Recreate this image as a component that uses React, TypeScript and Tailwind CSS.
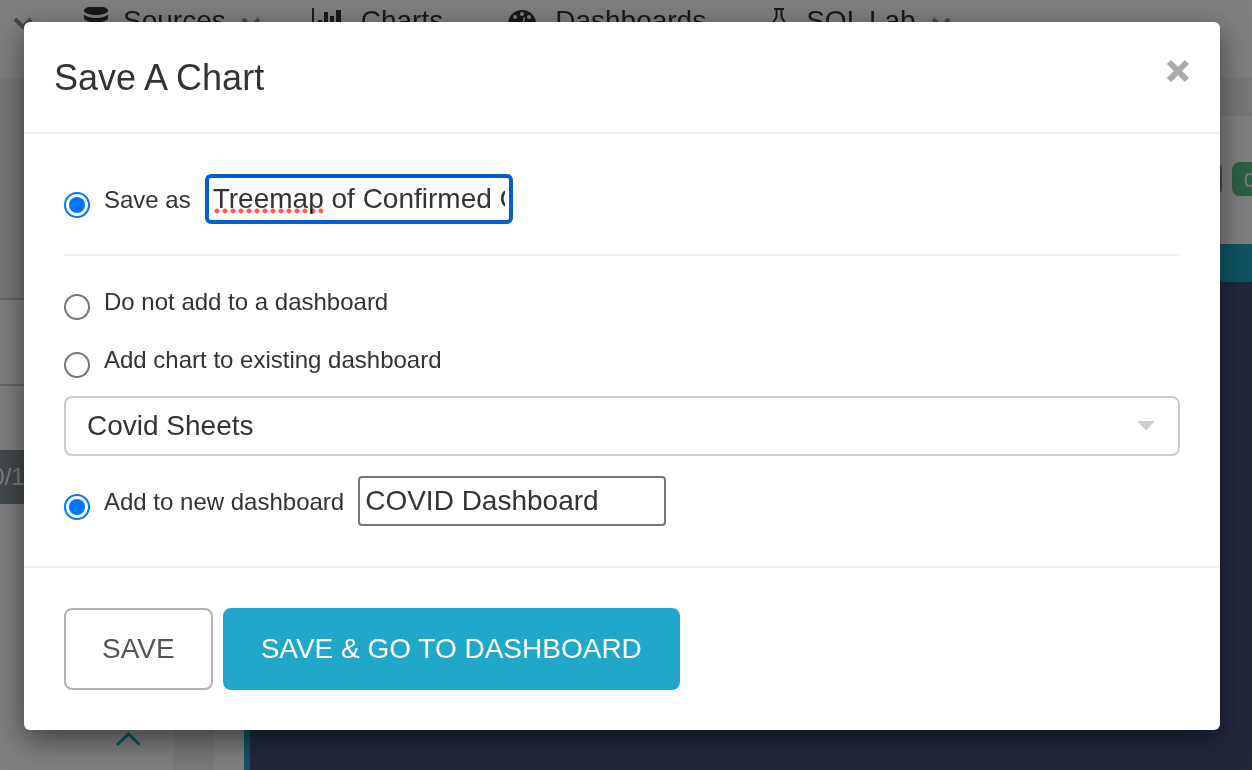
import React, { useState } from "react";

const existingDashboards = ["Covid Sheets", "Sales Dashboard", "World Bank's Data"];

function NavChevron() {
  return (
    <svg viewBox="0 0 20 14" className="mt-[17px] h-[14px] w-5 shrink-0 self-start" fill="none" stroke="#879399" strokeWidth="4">
      <path d="M2 2l8 8 8-8" />
    </svg>
  );
}

function DatabaseIcon() {
  return (
    <svg viewBox="0 1 24 28" className="h-7 w-6 shrink-0" fill="#333">
      <ellipse cx="12" cy="4.5" rx="12" ry="4.5" />
      <path d="M0 8.500c2.500 2.400 7 3.500 12 3.500s9.500-1.100 12-3.500V12c0 2.500-5.400 4.500-12 4.500S0 14.500 0 12z" />
      <path d="M0 16c2.500 2.400 7 3.500 12 3.500s9.500-1.100 12-3.500v6c0 3-5.400 5-12 5S0 25 0 22z" />
    </svg>
  );
}

function BarChartIcon() {
  return (
    <svg viewBox="0 1 34 28" className="h-7 w-[34px] shrink-0" fill="#333">
      <path d="M0 2h2v22h32v2H0z" />
      <path d="M6 14h4v8H6zM12 6h4v16h-4zM18 10h4v12h-4zM24 4h5v18h-5z" />
    </svg>
  );
}

function GaugeIcon() {
  return (
    <svg viewBox="-2 1 46 28" className="h-7 w-[46px] shrink-0">
      <path d="M12 18a14 14 0 0 1 28 0c0 3-.8 5.500-2 7.500-.4.500-.8.500-1.400.500H15.400c-.6 0-1 0-1.400-.500-1.200-2-2-4.500-2-7.500z" fill="#333" />
      <g fill="#fff">
        <circle cx="26" cy="8" r="2" />
        <circle cx="19" cy="11" r="2" />
        <circle cx="33" cy="11" r="2" />
        <circle cx="16" cy="18" r="2" />
        <circle cx="36" cy="18" r="2" />
      </g>
      <path d="M28.500 11.500L26.500 20" stroke="#fff" strokeWidth="1.500" />
    </svg>
  );
}

function FlaskIcon() {
  return (
    <svg viewBox="0 1 34 28" className="h-7 w-[34px] shrink-0" fill="none" stroke="#333" strokeWidth="2">
      <path d="M17 3h10M19.500 3v8l-8 13.500h21L24.500 11V3" />
    </svg>
  );
}

const navItems = [
  { label: "Sources", icon: DatabaseIcon, menu: true },
  { label: "Charts", icon: BarChartIcon, menu: false },
  { label: "Dashboards", icon: GaugeIcon, menu: false },
  { label: "SQL Lab", icon: FlaskIcon, menu: true },
];

function ExplorePage() {
  return (
    <div aria-hidden="true" className="flex min-h-screen flex-col bg-[#f0f0f0]">
      <nav className="flex h-[78px] items-start gap-[51px] overflow-hidden bg-white pl-[13px] text-[28px] leading-[42px] text-[#333]">
        <NavChevron />
        {navItems.map(({ label, icon: Icon, menu }) => (
          <div key={label} className="flex h-[42px] shrink-0 items-center gap-[15px]">
            <Icon />
            <span>{label}</span>
            {menu && <NavChevron />}
          </div>
        ))}
      </nav>

      <div className="flex flex-1">
        {/* Query controls */}
        <div className="flex w-[174px] shrink-0 flex-col pt-[220px]">
          <div className="h-[88px] border-y-2 border-[#c0ccd1] bg-white" />
          <div className="flex flex-1 flex-col bg-white pt-16">
            <div className="flex h-[54px] w-[38px] items-center justify-end overflow-hidden bg-[#879399] text-2xl text-white">
              10/17
            </div>
            <svg viewBox="0 0 24 14" className="mt-[228px] ml-[116px] h-[14px] w-6" fill="none" stroke="#1fa8c9" strokeWidth="3" strokeLinecap="round">
              <path d="M2 12L12.500 2 23 12" />
            </svg>
          </div>
        </div>

        {/* Chart panel */}
        <div className="flex min-w-0 flex-1 flex-col pt-[38px] pl-10">
          <div className="flex flex-1 flex-col bg-white pl-[30px]">
            <div className="flex h-32 items-center justify-end gap-[10px] overflow-hidden pb-[2px] text-xl text-white">
              <span className="h-[34px] w-20 rounded-lg bg-[#879399]" />
              <span className="-mr-20 h-[34px] w-[100px] rounded-lg bg-[#5ac189] px-3 leading-9">00:00:01</span>
            </div>
            <div className="flex flex-1 flex-col border-l-[6px] border-[#1fa8c9] bg-[#454e7c]">
              <div className="h-[38px] bg-[#1fa8c9]" />
            </div>
          </div>
        </div>
      </div>
    </div>
  );
}

const radioClass =
  "h-[26px] w-[26px] shrink-0 appearance-none rounded-full border-2 border-[#767676] bg-white bg-clip-content p-[3px] checked:border-[#0075ff] checked:bg-[#0075ff]";

export default function App() {
  const [chartName, setChartName] = useState("Treemap of Confirmed Cases");
  const [target, setTarget] = useState("new");
  const [existing, setExisting] = useState(existingDashboards[0]);
  const [newName, setNewName] = useState("COVID Dashboard");

  return (
    <div className="relative min-h-screen overflow-hidden font-['Liberation_Sans',Arial,sans-serif] text-[#333]">
      <ExplorePage />

      {/* Modal */}
      <div className="absolute inset-0 bg-black/50 pt-[22px] pr-8 pl-6">
        <form
          role="dialog"
          aria-labelledby="save-title"
          onSubmit={(e) => e.preventDefault()}
          className="rounded-md bg-white shadow-[0_10px_30px_rgba(0,0,0,0.5)]"
        >
          <header className="flex items-start justify-between border-b-2 border-[#f2f2f2] px-[30px] pt-8 pb-[30px]">
            <h1 id="save-title" className="text-4xl leading-[48px]">Save A Chart</h1>
            <button type="button" aria-label="Close" className="py-[5px]">
              <svg viewBox="0 0 24 24" className="h-6 w-6" stroke="#aaa" strokeWidth="6">
                <path d="M3 3l18 18M21 3L3 21" />
              </svg>
            </button>
          </header>

          <div className="p-10">
            <div className="flex h-[50px] items-start gap-[14px]">
              <input id="save-as" type="radio" name="action" defaultChecked className={`${radioClass} mt-[18px]`} />
              <label htmlFor="save-as" className="text-2xl leading-[52px]">Save as</label>
              <div className="relative">
                <input
                  aria-label="Chart name"
                  value={chartName}
                  onChange={(e) => setChartName(e.target.value)}
                  className="block h-[50px] w-[308px] rounded-md border-4 border-[#0060d0] px-1 text-[28px] outline-none"
                />
                {/* spelling mark */}
                <span className="pointer-events-none absolute bottom-[10px] left-2 h-[6px] w-[110px] bg-[radial-gradient(circle,#ff5f57_2px,transparent_3px)] bg-[length:8px_6px] mix-blend-multiply" />
              </div>
            </div>

            <hr className="my-[30px] border-t-2 border-[#f2f2f2]" />

            <div className="flex h-[58px] items-start gap-[14px]">
              <input
                id="no-dashboard"
                type="radio"
                name="target"
                checked={target === "none"}
                onChange={() => setTarget("none")}
                className={`${radioClass} mt-2`}
              />
              <label htmlFor="no-dashboard" className="text-2xl leading-8">Do not add to a dashboard</label>
            </div>
            <div className="flex h-[52px] items-start gap-[14px]">
              <input
                id="existing-dashboard"
                type="radio"
                name="target"
                checked={target === "existing"}
                onChange={() => setTarget("existing")}
                className={`${radioClass} mt-2`}
              />
              <label htmlFor="existing-dashboard" className="text-2xl leading-8">Add chart to existing dashboard</label>
            </div>
            <div className="relative">
              <select
                aria-label="Existing dashboard"
                value={existing}
                onChange={(e) => setExisting(e.target.value)}
                className="block h-[60px] w-full appearance-none rounded-lg border-2 border-[#ccc] bg-white px-[21px] text-[28px]"
              >
                {existingDashboards.map((name) => (
                  <option key={name}>{name}</option>
                ))}
              </select>
              <svg viewBox="0 0 16 10" className="pointer-events-none absolute top-[25px] right-[26px] h-[10px] w-4" fill="#ccc">
                <path d="M0 0h16v1L8 9.500 0 1z" />
              </svg>
            </div>
            <div className="mt-5 flex h-[50px] items-start gap-[14px]">
              <input
                id="new-dashboard"
                type="radio"
                name="target"
                checked={target === "new"}
                onChange={() => setTarget("new")}
                className={`${radioClass} mt-[18px]`}
              />
              <label htmlFor="new-dashboard" className="text-2xl leading-[52px]">Add to new dashboard</label>
              <input
                aria-label="New dashboard name"
                value={newName}
                onChange={(e) => setNewName(e.target.value)}
                className="block h-[50px] w-[308px] rounded border-2 border-[#767676] px-[5px] text-[28px]"
              />
            </div>
          </div>

          <footer className="flex gap-[10px] border-t-2 border-[#f2f2f2] p-10 text-[28px] leading-[78px]">
            <button type="submit" className="rounded-lg border-2 border-[#b2b2b2] px-9 text-[#555]">
              SAVE
            </button>
            <button type="submit" className="rounded-lg border-2 border-[#20a7c9] bg-[#20a7c9] px-9 text-white">
              SAVE &amp; GO TO DASHBOARD
            </button>
          </footer>
        </form>
      </div>
    </div>
  );
}
